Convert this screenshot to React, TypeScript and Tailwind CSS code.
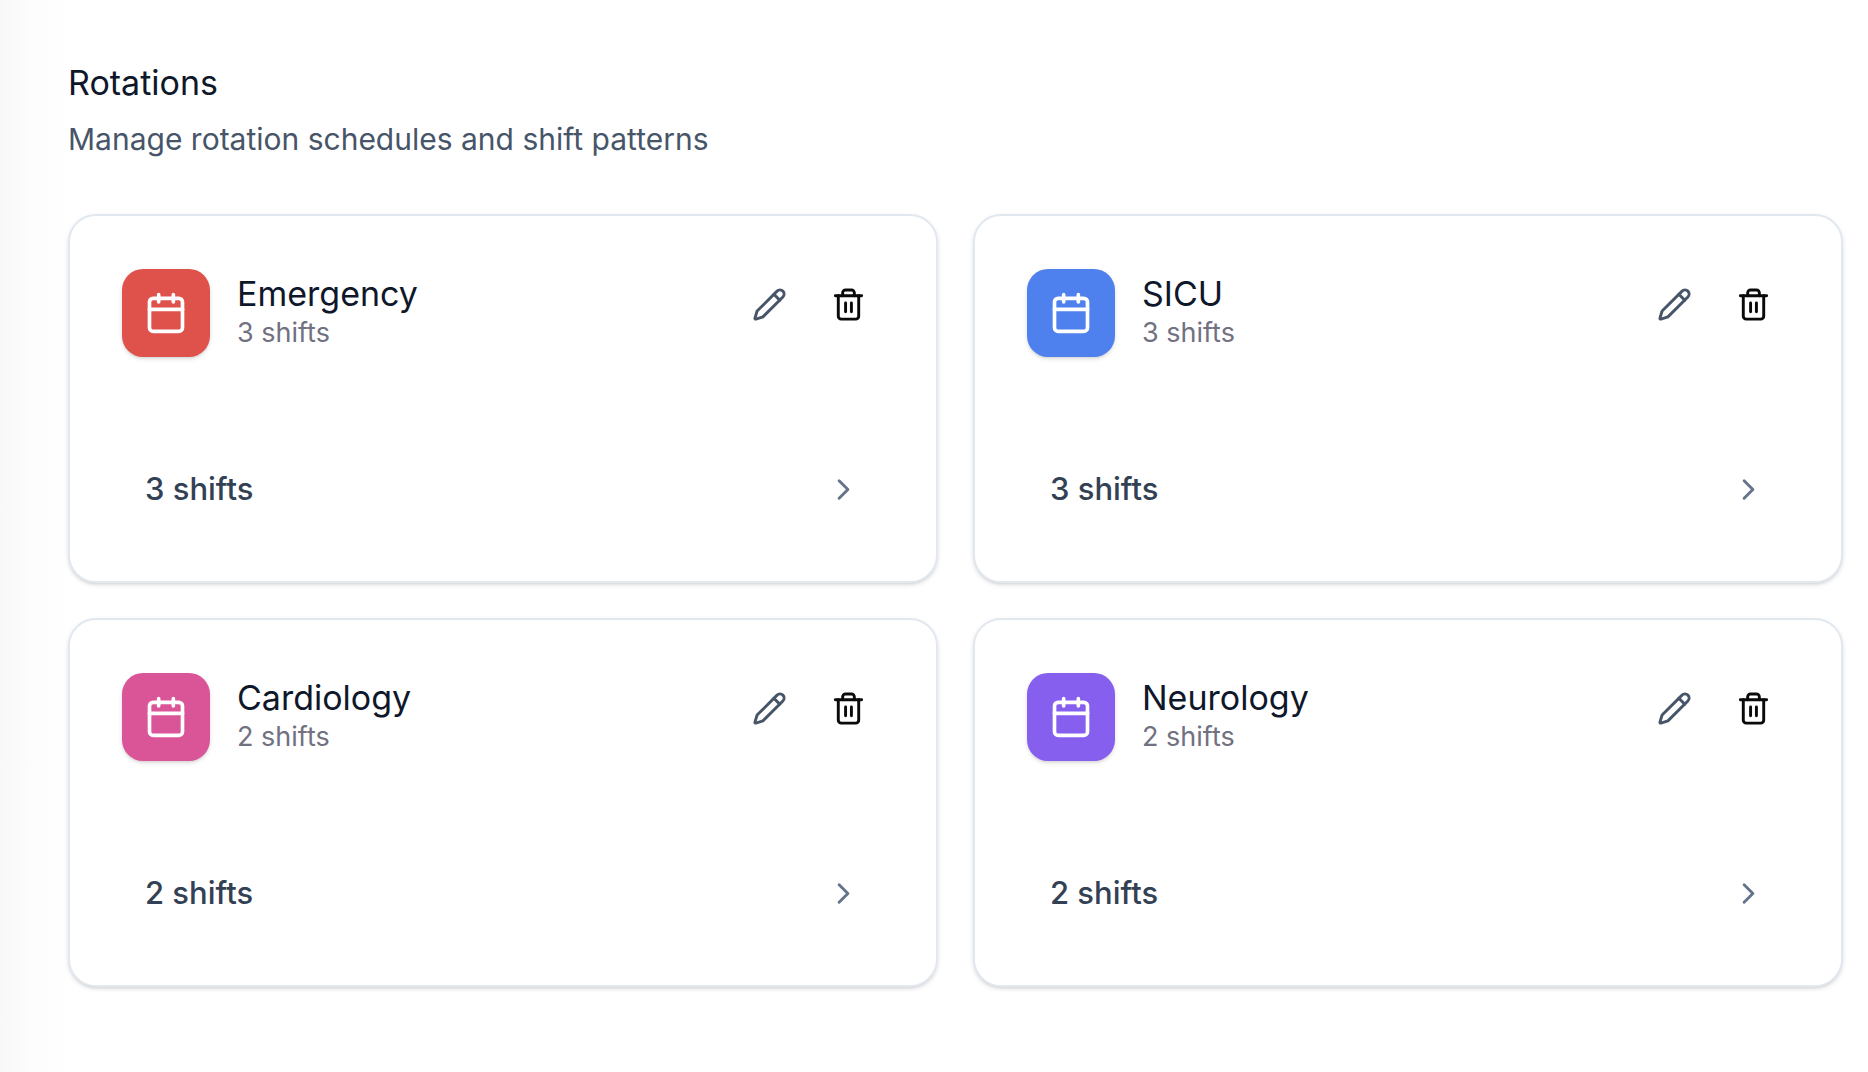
import { Calendar, ChevronRight, Pencil, Trash2 } from "lucide-react";

const rotations = [
  { name: "Emergency", shifts: 3, color: "bg-[#df524c]" },
  { name: "SICU", shifts: 3, color: "bg-[#4f81ee]" },
  { name: "Cardiology", shifts: 2, color: "bg-[#da5597]" },
  { name: "Neurology", shifts: 2, color: "bg-[#865fee]" },
];

type Rotation = (typeof rotations)[number];

function RotationCard({ name, shifts, color }: Rotation) {
  return (
    <article className="rounded-[28px] border-2 border-[#e2e8f0] bg-white pt-[53px] pr-[53px] pb-[52px] pl-[52px] shadow-[0_2px_5px_rgba(0,0,0,0.1),0_2px_3px_-1px_rgba(0,0,0,0.1)]">
      <div className="flex items-start justify-between">
        <div className="flex items-center gap-[27px]">
          <div className={`flex size-[88px] items-center justify-center rounded-[21px] shadow-[0_2px_5px_rgba(0,0,0,0.1),0_2px_3px_-1px_rgba(0,0,0,0.1)] ${color}`}>
            <Calendar className="size-11 text-white" />
          </div>
          <div>
            <h2 className="text-[34px] leading-10 text-[#0f172a]">{name}</h2>
            <p className="text-[27px] leading-[38px] text-[#717182]">{shifts} shifts</p>
          </div>
        </div>
        <div className="flex gap-[9px]">
          <button aria-label={`Edit ${name}`} className="flex size-[70px] items-center justify-center text-[#475569]">
            <Pencil className="size-[35px]" />
          </button>
          <button aria-label={`Delete ${name}`} className="flex size-[70px] items-center justify-center text-[#0a0a0a]">
            <Trash2 className="size-[35px]" />
          </button>
        </div>
      </div>
      <button className="mt-23 flex h-20 w-full items-center justify-between pr-[22px] pl-[23px] text-[#334155]">
        <span className="text-[31px] font-medium">{shifts} shifts</span>
        <ChevronRight className="size-[35px] text-[#64748b]" />
      </button>
    </article>
  );
}

export default function App() {
  return (
    <main className="min-h-screen bg-linear-to-r from-[#f8f8f8] via-[#fdfdfd] via-[36px] to-white to-[74px] pt-15 pr-[25px] pl-17 font-['Inter',sans-serif]">
      <header>
        <h1 className="text-[34px] leading-[46px] text-[#0f172a]">Rotations</h1>
        <p className="mt-[13px] text-[30px] leading-10 text-[#475569]">Manage rotation schedules and shift patterns</p>
      </header>
      <section className="mt-[55px] grid grid-cols-2 gap-[35px]">
        {rotations.map((rotation) => (
          <RotationCard key={rotation.name} {...rotation} />
        ))}
      </section>
    </main>
  );
}
